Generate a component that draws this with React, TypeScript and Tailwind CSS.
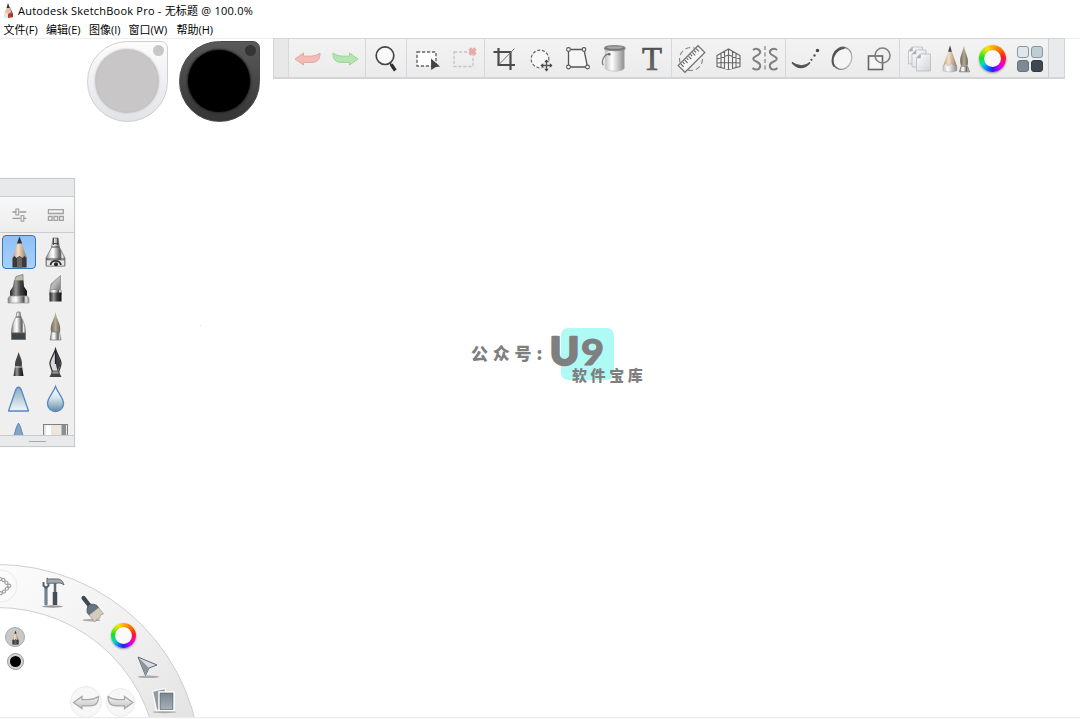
import React from "react";

type IconProps = { children: React.ReactNode; className?: string };

function Icon({ children, className = "h-[38px] w-[37px]" }: IconProps) {
  return (
    <svg viewBox="-18.5 -19 37 38" className={className} fill="none" stroke="#555" strokeWidth="1.3">
      {children}
    </svg>
  );
}

function Gradients() {
  return (
    <svg className="absolute h-0 w-0">
      <defs>
        <linearGradient id="metal">
          <stop offset="0" stopColor="#777" />
          <stop offset=".2" stopColor="#ddd" />
          <stop offset=".38" stopColor="#fff" />
          <stop offset=".6" stopColor="#999" />
          <stop offset=".75" stopColor="#555" />
          <stop offset=".85" stopColor="#eee" />
          <stop offset="1" stopColor="#888" />
        </linearGradient>
        <linearGradient id="dark">
          <stop offset="0" stopColor="#222" />
          <stop offset=".35" stopColor="#999" />
          <stop offset=".6" stopColor="#444" />
          <stop offset="1" stopColor="#111" />
        </linearGradient>
        <linearGradient id="wood">
          <stop offset="0" stopColor="#b59a80" />
          <stop offset=".4" stopColor="#f4dfc6" />
          <stop offset="1" stopColor="#94765c" />
        </linearGradient>
        <linearGradient id="hair">
          <stop offset="0" stopColor="#6f665b" />
          <stop offset=".5" stopColor="#b5a894" />
          <stop offset="1" stopColor="#6a6157" />
        </linearGradient>
        <linearGradient id="chisel" x2="1" y2="1">
          <stop offset="0" stopColor="#777" />
          <stop offset=".5" stopColor="#bbb" />
          <stop offset="1" stopColor="#777" />
        </linearGradient>
        <linearGradient id="can">
          <stop offset="0" stopColor="#c4c4c4" />
          <stop offset=".35" stopColor="#fff" />
          <stop offset="1" stopColor="#8c8c8c" />
        </linearGradient>
        <linearGradient id="blue" x2="0" y2="1">
          <stop offset="0" stopColor="#88a9bd" />
          <stop offset="1" stopColor="#f2f8fc" />
        </linearGradient>
        <linearGradient id="drop" x2="0" y2="1">
          <stop offset="0" stopColor="#fff" />
          <stop offset=".45" stopColor="#d9e6ed" />
          <stop offset="1" stopColor="#5f8ba8" />
        </linearGradient>
        <linearGradient id="page" x2="1" y2="1">
          <stop offset="0" stopColor="#fff" />
          <stop offset="1" stopColor="#cfd2d8" />
        </linearGradient>
        <linearGradient id="slate" x2="0" y2="1">
          <stop offset="0" stopColor="#76818d" />
          <stop offset="1" stopColor="#aab4be" />
        </linearGradient>
        <linearGradient id="fadeStroke">
          <stop offset="0" stopColor="#444" />
          <stop offset="1" stopColor="#bbb" />
        </linearGradient>
        <linearGradient id="textTone" x2="0" y2="1">
          <stop offset="0" stopColor="#444" />
          <stop offset="1" stopColor="#777" />
        </linearGradient>
        <linearGradient id="arrowTone" x2="0" y2="1">
          <stop offset="0" stopColor="#f3f3f3" />
          <stop offset="1" stopColor="#c4c4c4" />
        </linearGradient>
        <linearGradient id="ringShade" x2="1" y2="1">
          <stop offset="0" stopColor="#fcfcfc" />
          <stop offset=".5" stopColor="#f0f0f0" />
          <stop offset="1" stopColor="#dedede" />
        </linearGradient>
      </defs>
    </svg>
  );
}

const ARROW = "M-12.5 0 L-4 -6 V-2.8 H2 C7 -2.8 9.5 -4 12.5 -6 C12.5 0 10.5 3.4 4 3.4 H-4 V6 Z";

function ColorWheel({ className }: { className: string }) {
  return (
    <span
      className={`${className} flex items-center justify-center rounded-full bg-[conic-gradient(#ffb000_0deg,#ff6a00_45deg,#ff1a1a_80deg,#ff00b0_115deg,#c000ff_145deg,#2020ff_180deg,#0090ff_215deg,#00e0c0_240deg,#18e018_275deg,#a0f000_310deg,#ffe000_335deg,#ffb000_360deg)] shadow-[0_1px_2px_rgba(0,0,0,0.4)]`}
    >
      <span className="h-[65%] w-[65%] rounded-full bg-[#fafafa] shadow-[0_0_1px_rgba(0,0,0,0.4)]" />
    </span>
  );
}

const undoIcon = <Icon><path d={ARROW} transform="translate(-1 0)" fill="#f3bcb6" stroke="#e0a9a3" strokeWidth="1" /></Icon>;
const redoIcon = <Icon><path d={ARROW} transform="scale(-1 1)" fill="#b5e5b1" stroke="#9ad297" strokeWidth="1" /></Icon>;
const zoomIcon = (
  <Icon>
    <circle cx="-1.5" cy="-3.3" r="8.8" fill="#fafafa" stroke="#444" strokeWidth="1.7" />
    <path d="M3.3 4 L5.3 6.5" stroke="#444" strokeWidth="2" />
    <path d="M4.8 5.5 L8.8 11.5" stroke="#2d2d2d" strokeWidth="3.2" />
  </Icon>
);
const selectIcon = (
  <Icon>
    <rect x="-10.5" y="-7" width="19" height="14" fill="#fff" stroke="#666" strokeDasharray="3.2 1.8" strokeWidth="1.4" />
    <path d="M3.5 -.5 L12.5 7.5 L8.3 8 L3.7 11 Z" fill="#444" stroke="none" />
  </Icon>
);
const deselectIcon = (
  <Icon>
    <rect x="-10.5" y="-7" width="19" height="14.5" stroke="#c4c4c4" strokeDasharray="3.2 1.8" />
    <path d="M5 -10.5 L11 -4.5 M11 -10.5 L5 -4.5" stroke="#e9a9a5" strokeWidth="3.3" />
  </Icon>
);
const cropIcon = (
  <Icon>
    <path d="M-11 -7 H6 V11 M-6 -11 V6 H10.5" stroke="#4b4b4b" strokeWidth="2.2" />
    <path d="M-5 5 L10 -10.5" strokeWidth="1" stroke="#777" />
  </Icon>
);
const lassoIcon = (
  <Icon>
    <circle cx="-1.5" cy="0" r="8.8" fill="#f8f8f8" stroke="#666" strokeDasharray="3 1.8" strokeWidth="1.2" />
    <path d="M5 1 V12 M-.5 6.5 H10.5" stroke="#eee" strokeWidth="4" />
    <path d="M5 1 V12 M-.5 6.5 H10.5" />
    <path d="M5 0.5 L2.8 3.2 H7.2Z M5 12.5 L2.8 9.8 H7.2Z M-1 6.5 L1.7 4.3 V8.7Z M11 6.5 L8.3 4.3 V8.7Z" fill="#444" stroke="none" />
  </Icon>
);
const distortIcon = (
  <Icon>
    <path d="M-10 -9.5 H5.5 L9 8 H-10 Z" fill="#f6f6f6" />
    {[[-10, -9.5], [5.5, -9.5], [9, 8], [-10, 8]].map(([x, y]) => (
      <circle key={`${x},${y}`} cx={x} cy={y} r="1.9" fill="#fff" strokeWidth="1.1" />
    ))}
  </Icon>
);
const fillIcon = (
  <Icon>
    <g transform="translate(-1.2 -.8)">
      <path d="M-9 -10 V10 C-8 14 9 14 10 10 V-10 Z" fill="url(#can)" stroke="#bbb" strokeWidth=".7" />
      <ellipse cx=".5" cy="-10" rx="10.3" ry="2.5" fill="#777" stroke="#888" strokeWidth="1.2" />
      <ellipse cx=".5" cy="-10.6" rx="8" ry="1.2" fill="#aaa" stroke="none" />
      <path d="M-5.5 -4 C-10 -4 -13.5 3 -11 7" stroke="#777" strokeWidth="1.2" />
      <circle cx="-5" cy="-4" r="1.3" fill="#666" stroke="none" />
    </g>
  </Icon>
);
const textIcon = (
  <Icon>
    <text x="-.5" y="11" textAnchor="middle" fontFamily="Liberation Serif, serif" fontSize="34" fill="url(#textTone)" stroke="#555" strokeWidth=".7" textLength="20" lengthAdjust="spacingAndGlyphs">T</text>
  </Icon>
);
const rulerIcon = (
  <Icon>
    <circle cx="-.5" cy="0" r="11.5" strokeDasharray="5 3" stroke="#888" strokeWidth="1.1" />
    <g transform="rotate(-45)">
      <rect x="-14" y="-4.8" width="28" height="9.6" fill="#f7f7f7" stroke="#777" />
      <path d="M-11 -4 V0 M-8.3 -4 V-1.5 M-5.6 -4 V0 M-2.9 -4 V-1.5 M-.2 -4 V0 M2.5 -4 V-1.5 M5.2 -4 V0 M7.9 -4 V-1.5 M10.6 -4 V0" strokeWidth="1" />
    </g>
  </Icon>
);
const perspectiveIcon = (
  <Icon>
    <path d="M-11.5 -3.5 L0 -10 L11.5 -3.5 V7.5 L0 10.5 L-11.5 7.5 Z M0 -10 V10.5 M-7.5 -5.5 V9 M-4 -7.5 V10 M7.5 -5.5 V9 M4 -7.5 V10 M-11.5 0 L0 -4 L11.5 0 M-11.5 4 L0 3.5 L11.5 4" fill="#f3f3f3" stroke="#666" strokeWidth="1.1" />
  </Icon>
);
const symmetryIcon = (
  <Icon>
    <path d="M-.5 -13 V13" strokeDasharray="4 2.5" stroke="#888" />
    {[1, -1].map((s) => (
      <path key={s} transform={`translate(-.5 0) scale(${s} 1)`} d="M12 -9 C9 -12 4 -9 5 -6 C6 -3 12 -3 11.8 0 C11.6 3 5 2 4.8 6.5 C4.7 10.5 9 12 12.5 9" stroke="#808080" strokeWidth="2" />
    ))}
  </Icon>
);
const steadyIcon = (
  <Icon>
    <path d="M-13.5 3.5 C-7 11.5 0 9 4.5 3.5 C0 7.5 -6 8.5 -13.5 3.5Z" fill="#444" stroke="#555" />
    <circle cx="6" cy=".8" r="1.1" fill="#555" stroke="none" />
    <circle cx="9" cy="-3.5" r="1.2" fill="#555" stroke="none" />
    <circle cx="12" cy="-8.5" r="1.7" fill="#444" stroke="none" />
  </Icon>
);
const ellipseIcon = (
  <Icon>
    <ellipse cx="-.5" cy="-.5" rx="9.5" ry="11.2" transform="rotate(20)" fill="#f5f5f5" stroke="url(#fadeStroke)" strokeWidth="1.4" />
    <path d="M2 -11 C-7 -10.5 -13 1 -8.3 7.5" stroke="#555" strokeWidth="1.8" />
  </Icon>
);
const shapesIcon = (
  <Icon>
    <rect x="-11" y="-3" width="14" height="13.5" fill="#f5f5f5" stroke="#666" strokeWidth="1.6" />
    <circle cx="3" cy="-3.5" r="7.5" stroke="#808080" strokeWidth="1.6" />
  </Icon>
);
const layersIcon = (
  <Icon>
    {[[-10, -12], [-6.5, -9], [-2, -5]].map(([x, y]) => (
      <g key={x} transform={`translate(${x} ${y})`} stroke="#b9bbc0" strokeWidth=".8">
        <path d="M4 0 H14 V17 H0 V4Z" fill="url(#page)" />
        <path d="M4 0 V4 H0Z" fill="#aaa" />
      </g>
    ))}
  </Icon>
);
const brushesIcon = (
  <Icon>
    <g transform="translate(.5 -.7)">
      <path d="M-6 -12 L-13 8 V12 C-9 14 -3 14 1 12 V8 Z" fill="url(#wood)" stroke="none" />
      <path d="M-6 -13 L-7.8 -6.5 H-4.2Z" fill="#444" stroke="none" />
      <path d="M-13 8 L-10 5 L-8 8 L-4 5 L-2 8 L1 8 V12.5 C-3 14 -9 14 -13 12.5Z" fill="url(#can)" stroke="#aaa" strokeWidth=".5" />
      <path d="M8 -12.5 C6.5 -5 2.5 -1 5 7.5 H11.5 C13.5 0 9 -5 8 -12.5Z" fill="url(#hair)" stroke="none" />
      <path d="M5 8 H11.5 L13.5 13.5 H3.5Z" fill="url(#metal)" stroke="#777" strokeWidth=".8" />
    </g>
  </Icon>
);

const wheelIcon = (
  <span className="flex h-[38px] w-[37px] items-center justify-center">
    <ColorWheel className="h-[27px] w-[27px]" />
  </span>
);
const swatchIcon = (
  <span className="grid h-[38px] w-[37px] grid-cols-[12px_12px] place-content-center gap-[2px]">
    <span className="h-3 w-3 rounded-[3px] border border-[#8b979e] bg-[#dfe7eb]" />
    <span className="h-3 w-3 rounded-[3px] border border-[#8b979e] bg-[#bdcdd4]" />
    <span className="h-3 w-3 rounded-[3px] border border-[#65747d] bg-[#7a8b95]" />
    <span className="h-3 w-3 rounded-[3px] border border-[#303b43] bg-[#3d4952]" />
  </span>
);

const groups: { width: string; icons: React.ReactNode[] }[] = [
  { width: "w-[77px]", icons: [undoIcon, redoIcon] },
  { width: "w-[41px]", icons: [zoomIcon] },
  { width: "w-[78px]", icons: [selectIcon, deselectIcon] },
  { width: "w-[187px]", icons: [cropIcon, lassoIcon, distortIcon, fillIcon, textIcon] },
  { width: "w-[114px]", icons: [rulerIcon, perspectiveIcon, symmetryIcon] },
  { width: "w-[114px]", icons: [steadyIcon, ellipseIcon, shapesIcon] },
  { width: "w-[149px]", icons: [layersIcon, brushesIcon, wheelIcon, swatchIcon] },
];

function Toolbar() {
  return (
    <div className="absolute left-[273px] top-0 flex h-[41px] w-[792px] border border-b-2 border-[#d4d5d7] bg-gradient-to-b from-[#f3f3f3] to-[#ebebeb]">
      <div className="w-[14px] shrink-0 bg-[#e8e8e9]" />
      {groups.map((group, i) => (
        <div key={i} className={`${group.width} flex shrink-0 items-center justify-center border-l border-[#d6d7dc] pt-px`}>
          {group.icons.map((icon, j) => (
            <button key={j} className="flex shrink-0 items-center">{icon}</button>
          ))}
        </div>
      ))}
      <div className="flex-1 border-l border-[#cfcfd1] bg-[#e9eaeb]" />
    </div>
  );
}

function Pencil() {
  return (
    <>
      <path d="M0 -14 L-6.8 5 V15 H7 V5 Z" fill="url(#wood)" stroke="none" />
      <path d="M0 -15.5 L-2.6 -8.5 H2.6 Z" fill="#333" stroke="none" />
      <path d="M-7 6 L-5 4 L-3 6 L0 4 L3 6 L5 4 L7 6 V15.5 H-7Z" fill="#3a3a3a" stroke="none" />
      <path d="M-2.5 6.5 L0 4.5 L2.5 6.5 V15.5 H-2.5Z" fill="#666" stroke="none" />
    </>
  );
}

const brushes: React.ReactNode[] = [
  <Pencil />,
  <>
    <path d="M-2.5 -14 H2.5 L3.8 -5 L9.5 6 V14 H-9.5 V6 L-3.8 -5Z" fill="url(#metal)" stroke="#777" strokeWidth=".8" />
    <path d="M-2 -14 V-7 M2.2 -14 V-7" stroke="#444" strokeWidth="1" />
    <path d="M-3 -8.5 H3.2 M-4 -5 H4 M-9.5 7 H9.5" stroke="#444" strokeWidth="1.2" />
    <path d="M-9 8 H9 V14 H-9Z" fill="#e6e6e6" stroke="#777" strokeWidth=".7" />
    <path d="M-5 13 C-4 7.5 4 7.5 5.5 13" stroke="#333" strokeWidth="1.8" />
    <circle cx=".5" cy="12.3" r="2" fill="#222" stroke="none" />
  </>,
  <>
    <path d="M-4 -8 L-2.5 -12.5 L4.5 -14.5 V-8Z" fill="#b9bda9" stroke="#7c7f70" strokeWidth=".8" />
    <path d="M-4.5 -8.5 H5 L5.5 -2.5 L8.5 2 V7 H-8.5 V2 L-5.5 -2.5Z" fill="url(#dark)" stroke="none" />
    <path d="M-8.8 7 H8.8 L10.5 9 V14 H-10.5 V9Z" fill="url(#metal)" stroke="#999" strokeWidth=".7" />
  </>,
  <>
    <path d="M-5.5 1 L-4.5 -5 L5 -13.5 V1Z" fill="url(#chisel)" stroke="#888" strokeWidth=".7" />
    <rect x="-6" y="1" width="12" height="5" fill="url(#metal)" stroke="none" />
    <rect x="-6" y="3.5" width="12" height="9" fill="url(#dark)" stroke="none" />
  </>,
  <>
    <path d="M-1.5 -14 H1.5 L2.5 -9 C6 -3 7 2 7 7 H-7 C-7 2 -6 -3 -2.5 -9Z" fill="url(#metal)" stroke="#777" strokeWidth=".7" />
    <path d="M-2.5 -9 H2.5" strokeWidth="1" />
    <path d="M-7 7 H7 V13.5 H-7Z" fill="#3d4447" stroke="#666" strokeWidth=".7" />
  </>,
  <>
    <path d="M0 -14 C-1 -6 -6 -2 -4.5 6 H4.5 C6 -2 1 -6 0 -14Z" fill="url(#hair)" stroke="none" />
    <path d="M-4 6 H4 L5.5 14 H-5.5Z" fill="url(#metal)" stroke="#777" strokeWidth=".7" />
  </>,
  <>
    <path d="M0 -11 C-1 -5 -4.5 -2 -3.2 4 H3.2 C4.5 -2 2 -5 0 -11Z" fill="#444" stroke="none" />
    <path d="M-3.5 3 H3.5 L5 13 H-5Z" fill="url(#dark)" stroke="none" />
    <path d="M-3.5 4 H3.5" stroke="#ccc" strokeWidth="1" />
  </>,
  <>
    <path d="M0 -14 C-2 -7 -6 -3 -5.5 1 C-5 5 -3 7 -3 10 H3 C3 7 5 5 5.5 1 C6 -3 2 -7 0 -14Z" fill="#d9dade" stroke="#333" />
    <path d="M0 -13 C3 -5 6 -2 4.5 3 L2 8 L.5 2Z" fill="#3a3d45" stroke="none" />
    <path d="M0 -12 V1" stroke="#222" />
    <path d="M-3 8 H3 L4 11 H-4Z" fill="#999" stroke="#333" strokeWidth=".7" />
    <path d="M-4.5 11 H4.5 L6 14 H-6Z" fill="#444" stroke="none" />
  </>,
  <path d="M-10 11 L-3.2 -9 C-1.5 -14 1.5 -14 3.2 -9 L10 11Z" fill="url(#blue)" stroke="#5688c3" strokeWidth="1.3" strokeLinejoin="round" />,
  <path d="M0 -13.5 C-2 -7.5 -8 -2.5 -8 3.5 C-8 8.5 -4 11.5 0 11.5 C4 11.5 8 8.5 8 3.5 C8 -2.5 2 -7.5 0 -13.5Z" fill="url(#drop)" stroke="#5688bb" strokeWidth="1.3" />,
  <path d="M-10 18 L-2 -10 L0 -14 L2 -10 L10 18Z" fill="#85a4c4" stroke="#5688c3" strokeWidth="1" />,
  <>
    <rect x="-12" y="-12.5" width="24" height="24" fill="#ece7de" stroke="#777" strokeWidth=".9" />
    <rect x="6" y="-12" width="4.5" height="22" fill="#85909a" stroke="none" />
    <path d="M-7 -11.5 V8" stroke="#fff" strokeWidth="5" />
  </>,
];

function BrushPalette() {
  return (
    <div className="absolute left-0 top-[140px] flex h-[269px] w-[75px] flex-col border border-l-0 border-[#c8cacc] bg-[#efefef] shadow-[0_0_1px_#ddd]">
      <div className="h-[17px] shrink-0 bg-[#e8e9eb]" />
      <div className="flex h-[37px] shrink-0 items-center border-y border-[#cbcccd] bg-gradient-to-b from-[#f8f8f8] to-[#ececec] pl-[0.5px]">
        <Icon>
          <path d="M-7 -3 H-3 M0 -3 H7 M-7 3.5 H1 M4 3.5 H7" stroke="#9b9b9b" />
          <rect x="-3.5" y="-6" width="2.8" height="6" stroke="#999" strokeWidth="1" />
          <rect x="1.7" y=".7" width="2.8" height="5.5" stroke="#999" strokeWidth="1" />
        </Icon>
        <Icon>
          <path d="M-7 -5.5 H8 V-1.5 H-7Z M-7 1.5 H-3.3 V5.5 H-7Z M-1.4 1.5 H2.4 V5.5 H-1.4Z M4.3 1.5 H8 V5.5 H4.3Z" stroke="#a1a1a1" />
        </Icon>
      </div>
      <div className="grid min-h-0 flex-1 auto-rows-[37px] grid-cols-[37px_37px] overflow-hidden">
        {brushes.map((brush, i) => (
          <button key={i} className="flex h-[37px] w-[37px] items-center justify-center">
            <span className={i === 0 ? "ml-px flex h-[34px] w-[34px] items-center justify-center overflow-hidden rounded-[4px] border border-[#3977bd] bg-gradient-to-b from-[#8fc0f7] to-[#a6d0fb]" : "flex"}>
              <Icon className="h-[38px] w-[37px] shrink-0">{brush}</Icon>
            </span>
          </button>
        ))}
      </div>
      <div className="flex h-[11px] shrink-0 items-center justify-center border-t border-[#c8cacc] bg-[#e8e9eb]">
        <span className="h-px w-[17px] bg-[#aaa]" />
      </div>
    </div>
  );
}

function Pucks() {
  return (
    <div className="absolute left-[87px] top-[3px] flex gap-[11px]">
      <div className="relative flex h-[81px] w-[81px] items-center justify-center rounded-[40.5px] rounded-tr-[7px] border border-[#cfcfd1] bg-gradient-to-b from-[#fcfcfc] to-[#e2e3e8]">
        <span className="mb-px mr-px h-[62px] w-[62px] rounded-full bg-[#c8c6c7] shadow-[0_0_2px_1px_#b5b5b5]" />
        <span className="absolute right-[3px] top-[3px] h-[11px] w-[11px] rounded-full bg-[#c6c7c8]" />
      </div>
      <div className="relative flex h-[81px] w-[81px] items-center justify-center rounded-[40.5px] rounded-tr-[7px] border border-[#4a4a4a] bg-gradient-to-b from-[#5a5a5a] to-[#353535]">
        <span className="mb-px mr-px h-[62px] w-[62px] rounded-full bg-black shadow-[0_0_2px_1px_#222]" />
        <span className="absolute right-[3px] top-[3px] h-[11px] w-[11px] rounded-full bg-[#353535]" />
      </div>
    </div>
  );
}

function Lagoon() {
  return (
    <div className="absolute -bottom-px left-0 h-[153px] w-[200px] overflow-hidden">
      <svg viewBox="0 0 200 153" className="absolute inset-0 h-full w-full">
        <path d="M-3 .5 A204 204 0 0 1 201 204.5 H158 A161 161 0 0 0 -3 43.5 Z" fill="url(#ringShade)" stroke="#cfcfcf" />
        <circle cx="1" cy="22" r="16" fill="#fafafa" stroke="#ebebeb" />
        <path d="M-4 16 L2 14.5 L9.5 22 L2 29.5 L-4 28" fill="none" stroke="#999" strokeWidth="4" strokeLinecap="round" strokeDasharray=".1 4" />
        <path d="M-4 16 L2 14.5 L9.5 22 L2 29.5 L-4 28" fill="none" stroke="#fff" strokeWidth="2" strokeLinecap="round" strokeDasharray=".1 4" />
      </svg>
      <div className="absolute left-[34px] top-[9px]">
        <Icon>
          <ellipse cx="0" cy="14.5" rx="10.5" ry="1.2" fill="#999" stroke="none" />
          <path d="M-6.5 -4 V12" stroke="#718392" strokeWidth="3.2" strokeLinecap="round" />
          <path d="M-9 -10 V-6.5 L-6.5 -4 L-4 -6.5 V-10" stroke="#546370" strokeWidth="2" />
          <path d="M2.5 -9 V0" stroke="#5c6872" strokeWidth="2.5" />
          <path d="M2.5 0 V13" stroke="#444d58" strokeWidth="4.5" />
          <path d="M-5.5 -14 L-4 -13 H4 C8 -13.5 10.5 -10.5 11.5 -7 C9 -9 7 -9.5 4.5 -8.8 H-3.5 L-5.5 -8Z" fill="#9fabb4" stroke="#5d6870" strokeWidth="1" />
        </Icon>
      </div>
      <div className="absolute left-[73px] top-[25px]">
        <Icon>
          <ellipse cx="0" cy="12.2" rx="9" ry="1.2" fill="#aaa" stroke="none" />
          <g transform="translate(.5 1) rotate(-38)">
            <rect x="-2" y="-16" width="4.2" height="14" rx="2" fill="#3e4853" stroke="none" />
            <path d="M-4 -3 L-1 -5 H1 L4 -3 L6 0 V3 H-6 V0Z" fill="#657383" stroke="#404c57" strokeWidth=".7" />
            <path d="M-6 3 H6 V11 L3 10 L0 12 L-3 11 L-6 12Z" fill="#d3ccbd" stroke="#999083" strokeWidth=".6" />
          </g>
        </Icon>
      </div>
      <ColorWheel className="absolute left-[111px] top-[59px] h-[25px] w-[25px]" />
      <div className="absolute left-[129px] top-[83px]">
        <Icon>
          <ellipse cx="1" cy="10.8" rx="11" ry="1.2" fill="#aaa" stroke="none" />
          <path d="M-9.5 -9 L9.5 -1 L1.5 2 L-2 9.5 Z" fill="#dadde0" stroke="#606870" strokeWidth="1" />
          <path d="M-9 -8.5 L1.5 2 L-2 9.5Z" fill="#8c959d" stroke="none" />
        </Icon>
      </div>
      <div className="absolute left-[145px] top-[117px]">
        <Icon>
          <ellipse cx="1" cy="12" rx="12" ry="1.2" fill="#aaa" stroke="none" />
          <rect x="-9" y="-11" width="13" height="20" transform="rotate(-12)" fill="#929ba5" stroke="#f7f7f7" strokeWidth="1.5" />
          <rect x="-4.5" y="-8" width="15" height="18.5" fill="url(#slate)" stroke="#fff" strokeWidth="1.5" />
          <rect x="-3.3" y="-6.8" width="12.6" height="16.2" stroke="#67717b" strokeWidth=".7" />
        </Icon>
      </div>
      <span className="absolute left-[5px] top-[63px] flex h-5 w-5 items-center justify-center overflow-hidden rounded-full border border-[#aaa] bg-[#c8c8c8]">
        <Icon className="h-[17px] w-[17px]"><Pencil /></Icon>
      </span>
      <span className="absolute left-[7px] top-[89px] flex h-[17px] w-[17px] items-center justify-center rounded-full border border-[#999] bg-[#d5d5d5]">
        <span className="h-[11px] w-[11px] rounded-full bg-black" />
      </span>
      <span className="absolute left-[70px] top-[122px] flex h-8 w-8 items-center justify-center rounded-full border border-[#ebebeb] bg-[#f7f7f7]">
        <Icon className="h-[38px] w-[37px] shrink-0"><path d={ARROW} transform="translate(-.5 .5)" fill="url(#arrowTone)" stroke="#a6a6a6" strokeWidth="1.2" /></Icon>
      </span>
      <span className="absolute left-[106px] top-[123.5px] flex h-[29px] w-[29px] items-center justify-center rounded-full border border-[#ebebeb] bg-[#f7f7f7]">
        <Icon className="h-[38px] w-[37px] shrink-0"><path d={ARROW} transform="translate(0 .5) scale(-1 1)" fill="url(#arrowTone)" stroke="#a6a6a6" strokeWidth="1.2" /></Icon>
      </span>
    </div>
  );
}

function Watermark() {
  return (
    <>
      <div className="absolute left-[561px] top-[290px] h-[52px] w-[53px] rounded-[7px] bg-[#b0faf6]" />
      <div className="absolute left-[471px] top-[286px] font-['Noto_Sans_CJK_SC',sans-serif] font-black text-[#7f7f7f]">
        <div className="flex items-center">
          <span className="w-[79px] whitespace-nowrap text-[17px] leading-[58px] tracking-[4.8px]">公众号:</span>
          <svg viewBox="0 0 56 38" className="-mt-[3px] h-[38px] w-14 overflow-visible" fill="#7f7f7f" stroke="#7f7f7f" strokeLinejoin="round">
            <text x="0" y="31.8" fontFamily="Lato, sans-serif" fontWeight="900" fontSize="37" textLength="29" lengthAdjust="spacingAndGlyphs" strokeWidth="2.4">U</text>
            <text x="31" y="31.8" fontFamily="Lato, sans-serif" fontWeight="900" fontSize="36" textLength="23" lengthAdjust="spacingAndGlyphs" strokeWidth="1">9</text>
          </svg>
        </div>
        <div className="-mt-[17px] ml-[101px] whitespace-nowrap text-[15px] leading-[20px] tracking-[3.6px]">软件宝库</div>
      </div>
    </>
  );
}

const menus = [
  { label: "文件(F)", width: "w-[42.5px]" },
  { label: "编辑(E)", width: "w-[43px]" },
  { label: "图像(I)", width: "w-[39.5px]" },
  { label: "窗口(W)", width: "w-[48px]" },
  { label: "帮助(H)", width: "w-[44px]" },
];

export default function App() {
  return (
    <div className="flex h-[719px] w-[1080px] flex-col overflow-hidden bg-white font-['Open_Sans','Noto_Sans_CJK_SC',sans-serif] text-[11px] text-black">
      <Gradients />
      <header className="flex h-[38px] shrink-0 flex-col">
        <div className="flex h-[21px] items-center">
          <svg viewBox="0 0 18 21" className="h-[21px] w-[18px] shrink-0">
            <path d="M8 5 L4 14 V17 L8 18 L13 17 V14Z" fill="#e3c1a2" />
            <path d="M8 3 L6.5 8 H9.9Z" fill="#333" />
            <path d="M4 13 L6 12.5 L8 14 V18 L4 17Z" fill="#e8e4e0" />
            <path d="M8 14 L11 12.5 L12 14 V17.3 L8 18Z" fill="#c33432" />
            <path d="M9.5 6 L13 14 V17 L12 17.3 L11.5 13Z" fill="#5a4a43" />
          </svg>
          <span className="whitespace-pre leading-none tracking-[0.22px]">Autodesk SketchBook Pro - 无标题 @ 100.0%</span>
        </div>
        <nav className="flex h-[17px] items-center pl-[3.5px]">
          {menus.map((m) => (
            <span key={m.label} className={`${m.width} shrink-0 whitespace-nowrap leading-none`}>{m.label}</span>
          ))}
        </nav>
      </header>
      <main className="relative flex-1 border-t border-[#eeeeee]">
        <div className="absolute -top-px left-0 h-full w-full">
          <Toolbar />
          <Pucks />
          <BrushPalette />
          <span className="absolute left-[200px] top-[287px] h-px w-px bg-[#ddd]" />
          <Watermark />
          <Lagoon />
        </div>
      </main>
      <footer className="flex h-[2px] shrink-0 border-t border-[#ececec] bg-[#fafafa]" />
    </div>
  );
}
